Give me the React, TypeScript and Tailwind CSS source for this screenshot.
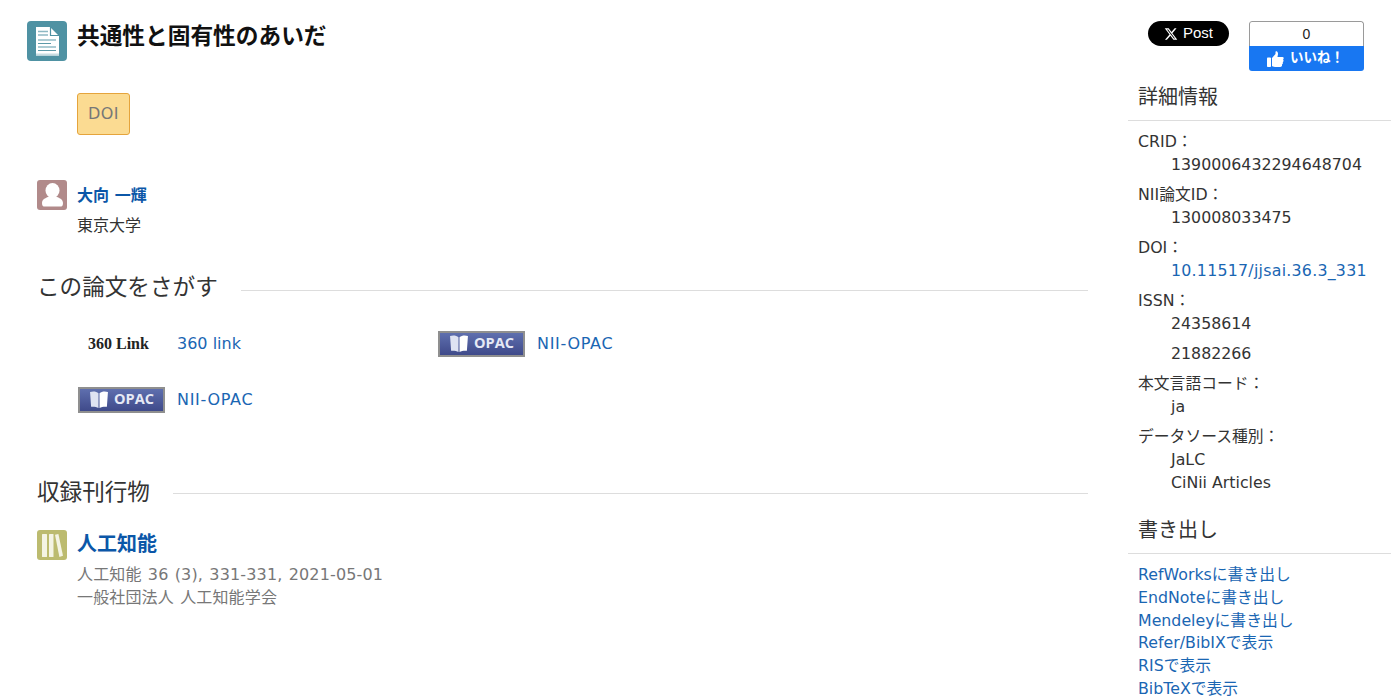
import React from "react";

const FONT = "font-['DejaVu_Sans','Noto_Sans_CJK_JP',sans-serif]";
const CJK = "font-['Noto_Sans_CJK_JP',sans-serif]";

const DocIcon = () => (
  <div className="w-10 h-10 shrink-0 rounded bg-[#4f92a3] flex items-center justify-center">
    <svg width="23" height="29" viewBox="0 0 23 29">
      <path d="M0 0H14L23 9V28.5H0Z" fill="#fff" />
      <path d="M14.5 0V8.5H23" fill="none" stroke="#4f92a3" strokeWidth="1.2" />
      <path d="M2 4.5H12M2 8H12" stroke="#8db8c3" strokeWidth="1.6" />
      <path d="M2 13H20M2 16.5H15M2 20H20M2 23.5H20" stroke="#5d9aa9" strokeWidth="1.2" />
      <path d="M0 27.5H23" stroke="#c8dde2" strokeWidth="2" />
    </svg>
  </div>
);

const PersonIcon = () => (
  <div className="w-[30px] h-[30px] shrink-0 rounded-[3px] bg-[#b18a8a] flex items-center justify-center">
    <svg width="21" height="24" viewBox="0 0 21 24">
      <ellipse cx="10.5" cy="7.5" rx="7" ry="7.5" fill="#fff" />
      <path d="M0 20C0 16 4 15 7 13.5H14C17 15 21 16 21 20C21 23 20 23.5 18 23.5H3C1 23.5 0 23 0 20Z" fill="#fff" />
    </svg>
  </div>
);

const BooksIcon = () => (
  <div className="w-[30px] h-[30px] shrink-0 rounded-[3px] bg-[#bcbb6f] flex items-center justify-center">
    <svg width="21" height="23" viewBox="0 0 21 23">
      <rect x="0" y="0" width="5" height="23" rx="0.5" fill="#f4f4e4" />
      <rect x="7" y="0" width="4.5" height="23" rx="0.5" fill="#f4f4e4" />
      <path d="M13 0.8L16.4 0L21 21.8L17.4 23Z" fill="#f4f4e4" />
    </svg>
  </div>
);

const OpacBadge = () => (
  <div className="w-[87px] h-[26px] flex items-center justify-center gap-[5px] border-2 border-[#8f8f8f] bg-gradient-to-b from-[#5f6fae] to-[#3f4a8a]">
    <svg width="20" height="18" viewBox="0 0 19 17">
      <path d="M1 1C4 0 7 0.5 9 2V16C7 15 4 14.5 2 15Z" fill="#dfe3f2" />
      <path d="M18 1C15 0 12 0.5 10 2V16C12 15 15 14.5 17 15Z" fill="#fff" />
    </svg>
    <span className="font-['Open_Sans',sans-serif] font-bold text-[14.5px] leading-none text-[#e6e9f5] -mt-[2px]">OPAC</span>
  </div>
);

const Link360 = () => (
  <div className="w-[87px] h-[26px] flex items-center pl-[10px]">
    <span className="font-['Liberation_Serif',serif] font-bold text-[16px] leading-none text-[#222]">360 Link</span>
  </div>
);

const Heading = ({ children, lineOffset }: { children: React.ReactNode; lineOffset: string }) => (
  <div className="flex items-center gap-[23px] pl-[37px]">
    <h2 className={`${CJK} text-[22.6px] leading-[30px] font-normal text-[#333] shrink-0`}>{children}</h2>
    <div className={`flex-1 h-px bg-[#ddd] ${lineOffset}`} />
  </div>
);

const SearchLink = ({ label, badge, spacing }: { label: string; badge: React.ReactNode; spacing: string }) => (
  <div className="flex items-center gap-[12px] h-[26px]">
    {badge}
    <a className={`text-[#1a66b3] text-[16px] ${spacing}`}>{label}</a>
  </div>
);

const Field = ({ label, values }: { label: string; values: React.ReactNode[] }) => (
  <div className="mb-[7px]">
    <div className="leading-[23px]">{label}：</div>
    {values.map((v, i) => (
      <div key={i} className={`pl-[33px] leading-[23px] ${i > 0 && label === "ISSN" ? "mt-[7px]" : ""}`}>
        {v}
      </div>
    ))}
  </div>
);

const exportLinks = [
  "RefWorksに書き出し",
  "EndNoteに書き出し",
  "Mendeleyに書き出し",
  "Refer/BibIXで表示",
  "RISで表示",
  "BibTeXで表示",
];

export default function App() {
  return (
    <div className={`${FONT} flex h-[699px] overflow-hidden bg-white text-[15.8px] text-[#333]`}>
      <main className="w-[1088px] shrink-0 pt-[21px]">
        <div className="flex gap-[10px] pl-[27px]">
          <DocIcon />
          <h1 className={`${CJK} text-[22.7px] leading-[28px] font-bold text-[#111]`}>共通性と固有性のあいだ</h1>
        </div>

        <div className="pl-[77px] mt-[32px]">
          <div className="w-[53px] h-[42px] flex items-center justify-center rounded-[3px] border border-[#e5a43c] bg-[#fbdb92] text-[#777] text-[16px] tracking-[0.5px]">
            DOI
          </div>
        </div>

        <div className="flex gap-[10px] pl-[37px] mt-[45px]">
          <PersonIcon />
          <div>
            <a className={`${CJK} block font-bold text-[16px] leading-[28px] text-[#0b57a8] [word-spacing:2px]`}>大向 一輝</a>
            <div className={`${CJK} text-[16px] leading-[23px] mt-[5px] text-[#333]`}>東京大学</div>
          </div>
        </div>

        <div className="mt-[35px]">
          <Heading lineOffset="mt-[9px]">この論文をさがす</Heading>
        </div>

        <div className="pl-[78px] mt-[30px] grid grid-cols-[360px_360px] gap-y-[30px] w-fit">
          <SearchLink label="360 link" badge={<Link360 />} spacing="tracking-normal" />
          <SearchLink label="NII-OPAC" badge={<OpacBadge />} spacing="tracking-[0.7px]" />
          <SearchLink label="NII-OPAC" badge={<OpacBadge />} spacing="tracking-[0.7px]" />
        </div>

        <div className="mt-[63px]">
          <Heading lineOffset="mt-[4px]">収録刊行物</Heading>
        </div>

        <div className="flex gap-[10px] pl-[37px] mt-[24px]">
          <BooksIcon />
          <div className="text-[#777] text-[16px] tracking-[0.15px]">
            <a className={`${CJK} block font-bold text-[20px] tracking-normal leading-[25px] text-[#0b57a8]`}>人工知能</a>
            <div className="leading-[23px] mt-[8px] [word-spacing:1px]">人工知能 36 (3), 331-331, 2021-05-01</div>
            <div className="leading-[23px] [word-spacing:1px]">一般社団法人 人工知能学会</div>
          </div>
        </div>
      </main>

      <aside className="flex-1 ml-[40px] pt-[21px] min-w-0">
        <div className="flex items-start pl-[20px] gap-[20px] h-[50px]">
          <div className="w-[81px] h-[25px] rounded-full bg-black text-white flex items-center justify-center gap-[5px]">
            <svg width="14" height="14" viewBox="0 0 24 24" fill="#fff">
              <path d="M18.244 2.25h3.308l-7.227 8.26 8.502 11.24H16.17l-5.214-6.817L4.99 21.75H1.68l7.73-8.835L1.254 2.25H8.08l4.713 6.231zm-1.161 17.52h1.833L7.084 4.126H5.117z" />
            </svg>
            <span className="font-['Liberation_Sans',sans-serif] text-[15px] leading-none -mt-[2px]">Post</span>
          </div>
          <div className="w-[115px] h-[50px] rounded-[3px] overflow-hidden flex flex-col">
            <div className="h-[25px] border border-b-0 border-[#9a9a9a] rounded-t-[3px] flex items-center justify-center font-['Liberation_Sans',sans-serif] text-[14px] text-[#222]">
              0
            </div>
            <div className="flex-1 bg-[#1877f2] flex items-center justify-center gap-[6px] text-white pr-[2px]">
              <svg width="17" height="16" viewBox="0 0 17 16" fill="#fff">
                <rect x="0" y="6.5" width="4" height="9.5" rx="0.8" />
                <path d="M5 7L8.5 3V0.8C8.5 0 10.8 0 11 2.5C11.1 4 10.5 5 10.5 6H15.5C17 6 17 8 16 8.5C17 9.5 16.5 10.8 15.7 11C16.3 12 15.8 13.2 15 13.4C15.3 14.6 14.6 16 13.2 16H8C6.5 16 5 15 5 15Z" />
              </svg>
              <span className={`${CJK} font-bold text-[13.5px] leading-none -mt-[3px]`}>いいね！</span>
            </div>
          </div>
        </div>

        <h3 className={`${CJK} text-[20px] font-normal leading-[28px] pl-[10px] mt-[11px] pb-[10px] border-b border-[#ddd]`}>詳細情報</h3>
        <div className="pl-[10px] mt-[9px]">
          <Field label="CRID" values={["1390006432294648704"]} />
          <Field label="NII論文ID" values={["130008033475"]} />
          <Field label="DOI" values={[<a className="text-[#1a66b3] tracking-[0.25px]">10.11517/jjsai.36.3_331</a>]} />
          <Field label="ISSN" values={["24358614", "21882266"]} />
          <Field label="本文言語コード" values={["ja"]} />
          <Field label="データソース種別" values={["JaLC", "CiNii Articles"]} />
        </div>

        <h3 className={`${CJK} text-[20px] font-normal leading-[28px] pl-[10px] mt-[21px] pb-[10px] border-b border-[#ddd]`}>書き出し</h3>
        <div className="pl-[10px] mt-[10px] text-[#1a66b3]">
          {exportLinks.map((l) => (
            <a key={l} className="block leading-[22.8px]">{l}</a>
          ))}
        </div>
      </aside>
    </div>
  );
}
